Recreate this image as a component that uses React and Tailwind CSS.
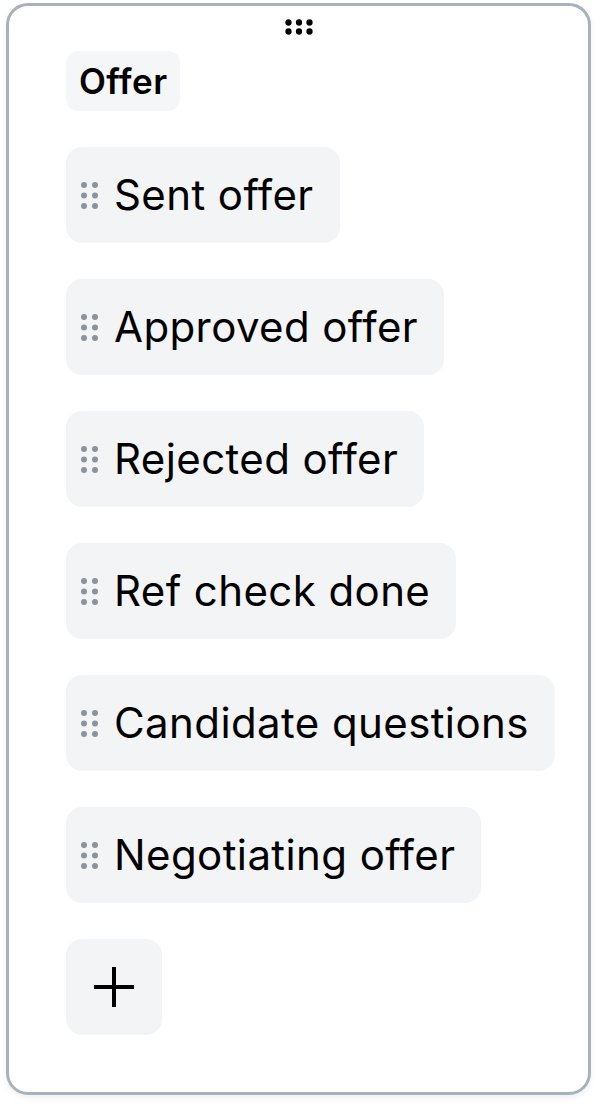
import React from 'react';
import { GripHorizontal } from 'lucide-react';

const stages = [
  'Sent offer',
  'Approved offer',
  'Rejected offer',
  'Ref check done',
  'Candidate questions',
  'Negotiating offer',
];

function DragDots() {
  return (
    <svg width="17" height="27" viewBox="0 0 17 27" className="shrink-0">
      {[3, 13.5, 24].map(cy => (
        <g key={cy} fill="#8c939b">
          <circle cx="3" cy={cy} r="3" />
          <circle cx="14" cy={cy} r="3" />
        </g>
      ))}
    </svg>
  );
}

function StageChip({ label }) {
  return (
    <div className="flex items-center gap-[16px] h-[96px] pl-[15px] pr-[26px] rounded-[16px] bg-[#f3f4f6]">
      <DragDots />
      <span className="text-[42px] tracking-[0.4px] leading-none text-black whitespace-nowrap">{label}</span>
    </div>
  );
}

export default function App() {
  return (
    <div className="w-[597px] h-[1104px] bg-white px-[6px] pt-[3px]" style={{ fontFamily: 'Inter, "Noto Sans", sans-serif' }}>
      <div className="border-[3px] border-[#a9b2bc] rounded-[22px] shadow-[0_3px_6px_rgba(0,0,0,0.06)] bg-white pl-[57px] pb-[57px] pt-[3px]">
        {/* handle */}
        <div className="flex justify-center -ml-[57px] mb-[6px]">
          <GripHorizontal size={36} strokeWidth={2.2} className="text-black" />
        </div>

        <div className="flex flex-col items-start gap-[36px]">
          <div className="h-[60px] px-[13px] flex items-center rounded-[12px] bg-[#f5f6f8]">
            <span className="text-[35px] tracking-[0.4px] font-semibold leading-none text-black">Offer</span>
          </div>

          {stages.map(s => <StageChip key={s} label={s} />)}

          <button className="w-[96px] h-[96px] rounded-[16px] bg-[#f3f4f6] flex items-center justify-center">
            <svg width="42" height="42" viewBox="0 0 42 42">
              <path d="M21 1v40M1 21h40" stroke="black" strokeWidth="4" />
            </svg>
          </button>
        </div>
      </div>
    </div>
  );
}
